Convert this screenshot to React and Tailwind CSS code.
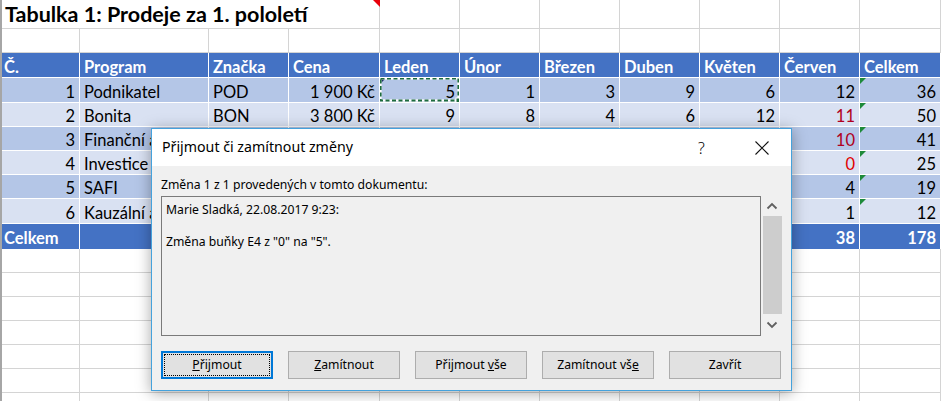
import React from "react";

const W = ["w-[80px]","w-[129px]","w-[80px]","w-[91px]","w-[80px]","w-[80px]","w-[80px]","w-[80px]","w-[80px]","w-[80px]","w-[81px]"];

const header = ["Č.","Program","Značka","Cena","Leden","Únor","Březen","Duben","Květen","Červen","Celkem"];
const data = [
  ["1","Podnikatel","POD","1 900 Kč","5","1","3","9","6","12","36"],
  ["2","Bonita","BON","3 800 Kč","9","8","4","6","12","11","50"],
  ["3","Finanční analýza","","","","","","","","10","41"],
  ["4","Investice","","","","","","","","0","25"],
  ["5","SAFI","","","","","","","","4","19"],
  ["6","Kauzální analýza","","","","","","","","1","12"],
];
const heights = ["h-[25px]","h-[24px]","h-[24px]","h-[24px]","h-[24px]","h-[25px]"];
const redCells = { "1-9": "text-[#b00020]", "2-9": "text-[#b00020]", "3-9": "text-[#e00000]" };

function Tri() {
  return <span className="absolute left-0 top-0 w-0 h-0 border-t-[6px] border-t-[#1e8a3a] border-r-[6px] border-r-transparent" />;
}

function EmptyRow({ h }) {
  return (
    <div className={`flex ${h}`}>
      {W.map((w, i) => (
        <div key={i} className={`${w} shrink-0 border-r border-b border-[#d4d4d4]`} />
      ))}
    </div>
  );
}

function DataRow({ row, idx }) {
  const bg = idx % 2 === 0 ? "bg-[#b4c6e7]" : "bg-[#d9e1f2]";
  return (
    <div className={`flex ${heights[idx]} ${bg}`}>
      {row.map((v, i) => {
        const left = i === 1 || i === 2;
        const red = redCells[`${idx}-${i}`] || "text-black";
        return (
          <div
            key={i}
            className={`${W[i]} shrink-0 relative border-r border-b border-white flex items-center pt-[4px] overflow-hidden whitespace-nowrap ${left ? "justify-start pl-[4px]" : "justify-end pr-[4px]"} ${red}`}
          >
            {i === 10 && <Tri />}
            {idx === 0 && i === 4 && (
              <>
                <span className="absolute left-0 top-0 w-0 h-0 border-t-[6px] border-t-[#1f2a6b] border-r-[6px] border-r-transparent" />
                <svg className="absolute left-[-1px] top-[-1px]" width="82" height="26">
                  <rect x="1.5" y="1.5" width="78" height="22" fill="none" stroke="#ffffff" strokeWidth="2.2" />
                  <rect x="1.5" y="1.5" width="78" height="22" fill="none" stroke="#1d6b3e" strokeWidth="2.2" strokeDasharray="4 2.5" />
                  <rect x="77" y="21" width="5" height="5" fill="#1d6b3e" stroke="#ffffff" strokeWidth="1" />
                </svg>
              </>
            )}
            <span className="relative">{v}</span>
          </div>
        );
      })}
    </div>
  );
}

function Chevron({ up }) {
  return (
    <svg width="12" height="8" viewBox="0 0 12 8">
      <polyline
        points={up ? "1.5,6.5 6,2 10.5,6.5" : "1.5,1.5 6,6 10.5,1.5"}
        fill="none"
        stroke="#606060"
        strokeWidth="1.8"
      />
    </svg>
  );
}

function Btn({ children, def }) {
  return (
    <div
      className={`w-[112px] h-[28px] shrink-0 flex items-center justify-center bg-[#e1e1e1] ${def ? "border-2 border-[#0078d7] p-[1px]" : "border border-[#adadad]"}`}
    >
      {def ? (
        <div className="w-full h-full border border-dotted border-black flex items-center justify-center">{children}</div>
      ) : (
        children
      )}
    </div>
  );
}

export default function App() {
  return (
    <div className="relative w-[941px] h-[401px] overflow-hidden bg-white font-['Lato',sans-serif] text-[16.5px] text-black">
      {/* sheet */}
      <div className="flex flex-col">
        {/* title row */}
        <div className="flex h-[29px]">
          <div className="w-[380px] shrink-0 relative border-r border-b border-[#d4d4d4] flex items-center pl-[5px] pt-[2px] whitespace-nowrap">
            <span className="font-bold text-[21.5px] leading-none">Tabulka 1: Prodeje za 1. pololetí</span>
            <span className="absolute right-[-1px] top-0 w-0 h-0 border-t-[7px] border-t-[#e8000b] border-l-[7px] border-l-transparent" />
          </div>
          {W.slice(4).map((w, i) => (
            <div key={i} className={`${w} shrink-0 border-r border-b border-[#d4d4d4]`} />
          ))}
        </div>
        <EmptyRow h="h-[24px]" />
        {/* header */}
        <div className="flex h-[25px] bg-[#4472c4] text-white font-bold">
          {header.map((v, i) => (
            <div key={i} className={`${W[i]} shrink-0 border-r border-b border-white flex items-center pt-[4px] pl-[4px] whitespace-nowrap`}>
              {v}
            </div>
          ))}
        </div>
        {data.map((r, i) => (
          <DataRow key={i} row={r} idx={i} />
        ))}
        {/* total */}
        <div className="flex h-[25px] bg-[#4472c4] text-white font-bold">
          {W.map((w, i) => (
            <div
              key={i}
              className={`${w} shrink-0 border-r border-white flex items-center pt-[4px] whitespace-nowrap ${i === 0 ? "pl-[4px]" : "justify-end pr-[4px]"}`}
            >
              {i === 0 ? "Celkem" : i === 9 ? "38" : i === 10 ? "178" : ""}
            </div>
          ))}
        </div>
        <EmptyRow h="h-[24px]" />
        <EmptyRow h="h-[24px]" />
        <EmptyRow h="h-[24px]" />
        <EmptyRow h="h-[24px]" />
        <EmptyRow h="h-[24px]" />
        <EmptyRow h="h-[24px]" />
        <EmptyRow h="h-[24px]" />
      </div>
      <div className="absolute left-0 top-0 w-[2px] h-full bg-[#a6a6a6]" />

      {/* dialog */}
      <div className="absolute left-[151px] top-[128px] w-[641px] h-[263px] border border-[#45a2dc] bg-[#f0f0f0] shadow-[0_2px_14px_rgba(0,0,0,0.35)] flex flex-col font-['Noto_Sans',sans-serif] text-[12.2px] text-black">
        <div className="h-[37px] bg-white flex items-center pl-[10px] shrink-0">
          <span className="text-[14.2px] leading-none">Přijmout či zamítnout změny</span>
          <span className="ml-auto w-[13px] text-center text-[16px] leading-none font-light mr-[47px]">?</span>
          <svg className="mr-[22px]" width="14" height="14" viewBox="0 0 14 14">
            <path d="M0.5 0.5 L13.5 13.5 M13.5 0.5 L0.5 13.5" stroke="#111" strokeWidth="1.1" fill="none" />
          </svg>
        </div>
        <div className="flex flex-col px-[9px]">
          <div className="mt-[11px] h-[16px] leading-[16px] whitespace-nowrap">Změna 1 z 1 provedených v tomto dokumentu:</div>
          <div className="mt-[3px] flex h-[140px] gap-[1px]">
            <div className="w-[600px] h-full border border-[#7a7a7a] pl-[4px] pt-[5px] leading-[16px]">
              <div>Marie Sladká, 22.08.2017 9:23:</div>
              <div className="h-[16px]" />
              <div>Změna buňky E4 z "0" na "5".</div>
            </div>
            <div className="w-[20px] h-full flex flex-col items-center">
              <div className="h-[20px] flex items-center justify-center"><Chevron up /></div>
              <div className="w-[19px] h-[98px] bg-[#cdcdcd]" />
              <div className="flex-1 flex items-center justify-center"><Chevron /></div>
            </div>
          </div>
          <div className="mt-[15px] flex gap-[15px]">
            <Btn def><span><span className="underline">P</span>řijmout</span></Btn>
            <Btn><span><span className="underline">Z</span>amítnout</span></Btn>
            <Btn><span>Přijmout <span className="underline">v</span>še</span></Btn>
            <Btn><span>Zamítnout vš<span className="underline">e</span></span></Btn>
            <Btn><span>Zavřít</span></Btn>
          </div>
        </div>
      </div>
    </div>
  );
}
